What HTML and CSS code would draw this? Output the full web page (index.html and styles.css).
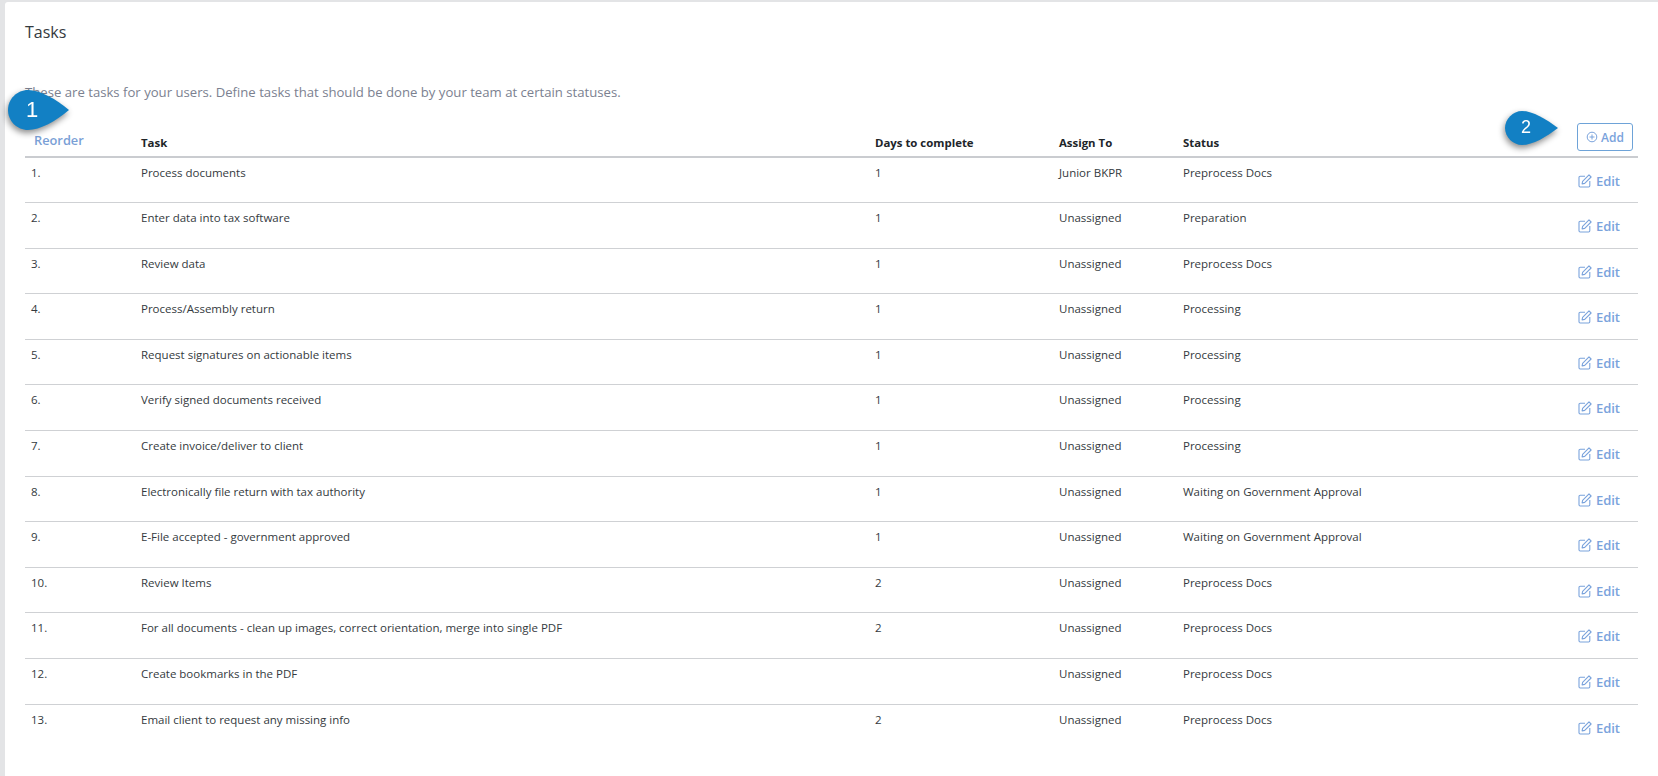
FILE: index.html
```html
<!DOCTYPE html>
<html lang="en">
<head>
<meta charset="utf-8">
<title>Tasks</title>
<link rel="stylesheet" href="styles.css">
</head>
<body>
<svg class="defs" width="0" height="0" aria-hidden="true">
  <symbol id="edit" viewBox="0 0 14 14"><path d="M7 2.2H2.2a1.2 1.2 0 0 0-1.2 1.2v8.4A1.2 1.2 0 0 0 2.2 13h8.4a1.2 1.2 0 0 0 1.2-1.2V7" fill="none" stroke="currentColor" stroke-width="1.1"/><path d="M11 .9l2.1 2.1-6.4 6.4-2.6.5.5-2.6z" fill="none" stroke="currentColor" stroke-width="1.1" stroke-linejoin="round"/></symbol>
</svg>
<main class="card">
  <h1 class="title">Tasks</h1>
  <p class="intro">These are tasks for your users. Define tasks that should be done by your team at certain statuses.</p>
  <table class="tasks">
    <colgroup><col class="c-num"><col class="c-task"><col class="c-days"><col class="c-assign"><col class="c-status"><col class="c-act"></colgroup>
    <thead>
      <tr>
        <th class="reorder">Reorder</th><th>Task</th><th>Days to complete</th><th>Assign To</th><th>Status</th>
        <th class="act"><button class="add"><svg class="add-ico" viewBox="0 0 12 12"><circle cx="6" cy="6" r="4.8" fill="none" stroke="currentColor"/><path d="M6 3.5v5M3.5 6h5" stroke="currentColor"/></svg>Add</button></th>
      </tr>
    </thead>
    <tbody>
      <tr><td>1.</td><td>Process documents</td><td>1</td><td>Junior BKPR</td><td>Preprocess Docs</td><td class="act"><a class="edit"><svg><use href="#edit"/></svg>Edit</a></td></tr>
      <tr><td>2.</td><td>Enter data into tax software</td><td>1</td><td>Unassigned</td><td>Preparation</td><td class="act"><a class="edit"><svg><use href="#edit"/></svg>Edit</a></td></tr>
      <tr><td>3.</td><td>Review data</td><td>1</td><td>Unassigned</td><td>Preprocess Docs</td><td class="act"><a class="edit"><svg><use href="#edit"/></svg>Edit</a></td></tr>
      <tr><td>4.</td><td>Process/Assembly return</td><td>1</td><td>Unassigned</td><td>Processing</td><td class="act"><a class="edit"><svg><use href="#edit"/></svg>Edit</a></td></tr>
      <tr><td>5.</td><td>Request signatures on actionable items</td><td>1</td><td>Unassigned</td><td>Processing</td><td class="act"><a class="edit"><svg><use href="#edit"/></svg>Edit</a></td></tr>
      <tr><td>6.</td><td>Verify signed documents received</td><td>1</td><td>Unassigned</td><td>Processing</td><td class="act"><a class="edit"><svg><use href="#edit"/></svg>Edit</a></td></tr>
      <tr><td>7.</td><td>Create invoice/deliver to client</td><td>1</td><td>Unassigned</td><td>Processing</td><td class="act"><a class="edit"><svg><use href="#edit"/></svg>Edit</a></td></tr>
      <tr><td>8.</td><td>Electronically file return with tax authority</td><td>1</td><td>Unassigned</td><td>Waiting on Government Approval</td><td class="act"><a class="edit"><svg><use href="#edit"/></svg>Edit</a></td></tr>
      <tr><td>9.</td><td>E-File accepted - government approved</td><td>1</td><td>Unassigned</td><td>Waiting on Government Approval</td><td class="act"><a class="edit"><svg><use href="#edit"/></svg>Edit</a></td></tr>
      <tr><td>10.</td><td>Review Items</td><td>2</td><td>Unassigned</td><td>Preprocess Docs</td><td class="act"><a class="edit"><svg><use href="#edit"/></svg>Edit</a></td></tr>
      <tr><td>11.</td><td>For all documents - clean up images, correct orientation, merge into single PDF</td><td>2</td><td>Unassigned</td><td>Preprocess Docs</td><td class="act"><a class="edit"><svg><use href="#edit"/></svg>Edit</a></td></tr>
      <tr><td>12.</td><td>Create bookmarks in the PDF</td><td></td><td>Unassigned</td><td>Preprocess Docs</td><td class="act"><a class="edit"><svg><use href="#edit"/></svg>Edit</a></td></tr>
      <tr><td>13.</td><td>Email client to request any missing info</td><td>2</td><td>Unassigned</td><td>Preprocess Docs</td><td class="act"><a class="edit"><svg><use href="#edit"/></svg>Edit</a></td></tr>
    </tbody>
  </table>
  <div class="pin pin-1"><svg viewBox="0 0 62 40"><path d="M20 0C32 0 48 9 61 20 48 31 32 40 20 40 9 40 0 31 0 20S9 0 20 0z"/></svg><span>1</span></div>
  <div class="pin pin-2"><svg viewBox="0 0 54 34"><path d="M17 0C28 0 41 8 53 17 41 26 28 34 17 34 8 34 0 26 0 17S8 0 17 0z"/></svg><span>2</span></div>
</main>
</body>
</html>
```
FILE: styles.css
```css
html, body { margin: 0; padding: 0; height: 100%; }
body { background: #e3e4e6; font-family: "Open Sans", "Noto Sans", sans-serif; color: #343a40; overflow: hidden; }
.defs { position: absolute; }
.card { position: relative; box-sizing: border-box; height: 774px; margin: 2px 0 0 5px; padding: 19px 20px 0 20px; background: #fff; border-radius: 3px 0 0 0; }
.title { margin: 0; font-size: 16px; line-height: 22px; font-weight: 400; color: #343a40; }
.intro { margin: 40px 0 0; font-size: 13.15px; line-height: 18px; color: #7b8190; }
.tasks { width: 1613px; margin-top: 12px; border-collapse: collapse; table-layout: fixed; font-size: 11.5px; }
.c-num { width: 110px; } .c-task { width: 734px; } .c-days { width: 184px; } .c-assign { width: 124px; } .c-act { width: 120px; }
th { height: 44px; padding: 15px 6px 0; box-sizing: border-box; text-align: left; font-size: 11.4px; font-weight: 700; color: #212529; border-bottom: 2px solid #caccd0; }
th.reorder { padding: 10px 0 0 9px; font-size: 12.8px; font-weight: 600; color: #7a9fd6; }
td { height: 45.6px; box-sizing: border-box; padding: 7px 6px 0 6px; vertical-align: top; line-height: 16px; border-bottom: 1px solid #cfd1d4; }
tbody tr:last-child td { border-bottom: 0; }
td.act, th.act { text-align: right; padding-right: 5px; }
th.act { padding-top: 5px; }
td.act { padding-top: 15px; padding-right: 18px; }
.edit { display: inline-flex; align-items: center; gap: 4px; font-size: 13px; font-weight: 600; color: #7aa3dc; }
.edit svg { width: 14px; height: 14px; }
.add { display: inline-flex; align-items: center; gap: 3px; box-sizing: border-box; width: 56px; height: 28px; padding: 0 0 0 8px; background: #fff; border: 1px solid #6ea3d8; border-radius: 3px; font: 600 12px "Open Sans", sans-serif; color: #7aa3dc; }
.add-ico { width: 12px; height: 12px; }
.pin { position: absolute; filter: drop-shadow(-1px 3px 3px rgba(0,0,0,.45)); }
.pin svg { display: block; width: 100%; height: 100%; fill: #1280c4; }
.pin span { position: absolute; color: #fff; font-family: "Liberation Sans", sans-serif; }
.pin-1 { left: 3px; top: 88px; width: 62px; height: 40px; }
.pin-1 span { left: 18px; top: 7px; font-size: 22px; }
.pin-2 { left: 1500px; top: 109px; width: 54px; height: 34px; }
.pin-2 span { left: 16px; top: 6px; font-size: 18px; }
```
